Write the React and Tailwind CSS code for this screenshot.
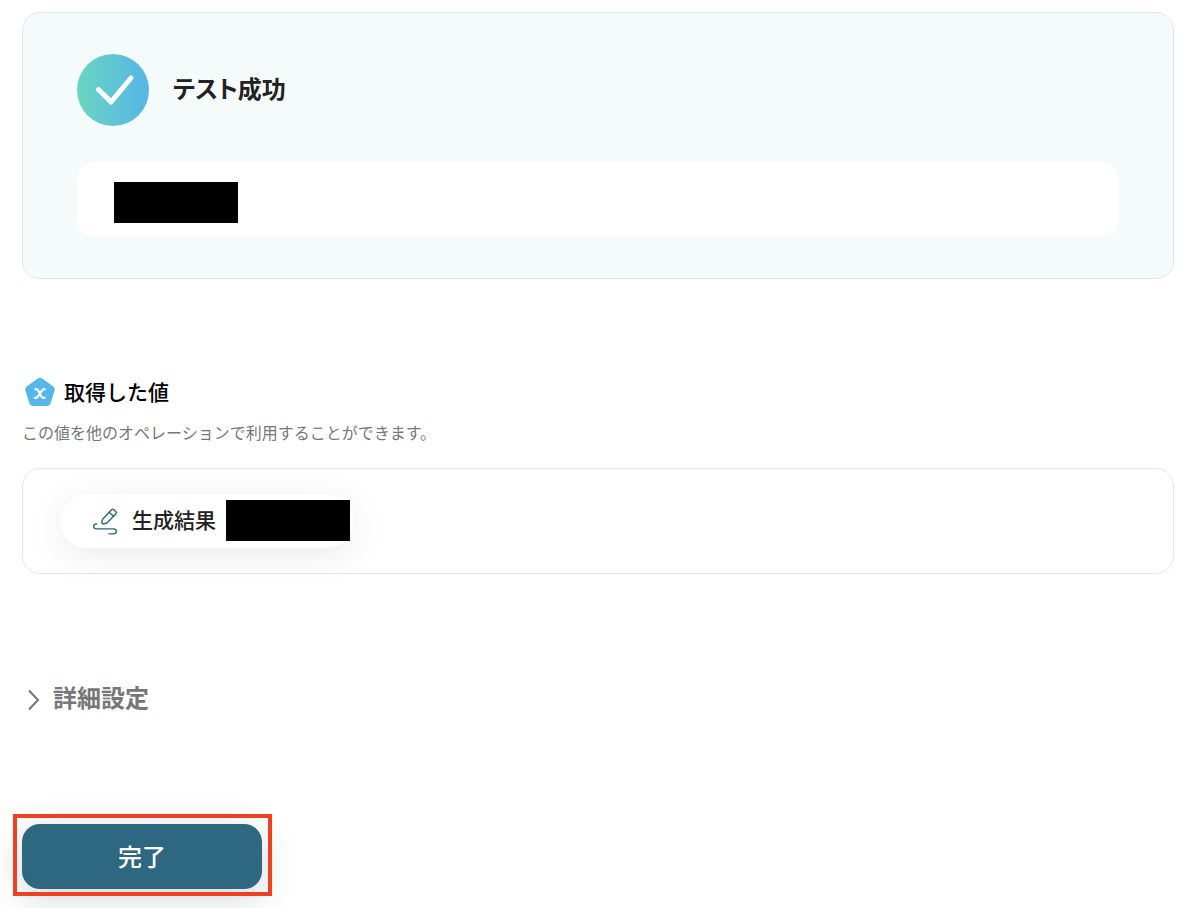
import React, { useState } from 'react';

const CheckBadge = () => (
  <svg className="size-18 shrink-0" viewBox="0 0 72 72" fill="none" aria-hidden="true">
    <defs>
      <linearGradient id="badge" x1="0" y1="0" x2="1" y2="0">
        <stop offset="0" stopColor="#6bd5c1" />
        <stop offset="1" stopColor="#55b6e7" />
      </linearGradient>
    </defs>
    <circle cx="36" cy="36" r="36" fill="url(#badge)" />
    <path
      d="M21.5 35.5L34 48L54 24"
      stroke="#fff"
      strokeWidth="5"
      strokeLinecap="round"
      strokeLinejoin="round"
    />
  </svg>
);

const ValueIcon = () => (
  <svg className="size-9 shrink-0" viewBox="0 0 36 36" fill="none" aria-hidden="true">
    <path
      d="M16.6 5.8Q18 4.9 19.4 5.8L30.4 13.6Q31.6 14.6 31.2 15.8L27.2 28.8Q26.6 30.4 25.2 30.4H10.8Q9.4 30.4 8.8 28.8L4.8 15.8Q4.4 14.6 5.6 13.6Z"
      fill="#55b6e7"
      stroke="#55b6e7"
      strokeWidth="3"
      strokeLinejoin="round"
    />
    <path
      d="M13.4 15.2C15.2 14.8 15.9 15.6 16.5 17L19.2 22.4C19.8 23.6 20.8 24.2 22.6 23.8M22.8 15.2C21 14.9 20.2 15.9 19.2 17.6L16.4 21.8C15.3 23.4 14.4 24.2 12.8 23.8"
      stroke="#fff"
      strokeWidth="2.1"
      strokeLinecap="round"
    />
  </svg>
);

const PencilIcon = () => (
  <svg
    className="size-8 shrink-0"
    viewBox="0 0 32 32"
    fill="none"
    stroke="#2d6780"
    strokeWidth="1.4"
    strokeLinecap="round"
    strokeLinejoin="round"
    aria-hidden="true"
  >
    <path d="M12.6 14.2L21.3 4.9Q22.7 3.6 24.1 4.9L25.6 6.3Q26.9 7.7 25.7 9.1L17 18L14 18.7Q11.7 19.1 11.9 16.8Z" />
    <path d="M19.2 7.2L23.4 11.2" />
    <path d="M6.8 18.9H6.2Q3.6 19.1 3.6 21.5Q3.8 23.9 6.4 23.9H23.6Q26.4 24.1 26.4 26.5Q26.2 28.9 23.6 28.9H18.8" />
  </svg>
);

const ChevronIcon = ({ open }) => (
  <svg
    className={open ? 'size-7 rotate-90' : 'size-7'}
    viewBox="0 0 28 28"
    fill="none"
    stroke="#777"
    strokeWidth="2"
    aria-hidden="true"
  >
    <path d="M4 7.5L13 17L4 26.5" />
  </svg>
);

const Redacted = () => <span className="block h-[41px] w-[124px] bg-black"></span>;

const App = () => {
  const [open, setOpen] = useState(false);

  return (
    <main className="bg-white pt-3 pr-5 pb-5 pl-[22px] font-['Noto_Sans_CJK_JP',sans-serif] text-[#222]">
      <section className="rounded-[18px] border border-[#e2e6e6] bg-[#f5fbfb] px-[54px] py-[41px]">
        <div className="flex items-center gap-6">
          <CheckBadge />
          <h2 className="pb-1 text-2xl font-bold [font-feature-settings:'palt']">テスト成功</h2>
        </div>
        <div className="mt-9 rounded-[18px] bg-white px-[37px] pt-5 pb-[14px]">
          <Redacted />
        </div>
      </section>

      <section className="mt-[95px]">
        <div className="flex items-center gap-[6px]">
          <ValueIcon />
          <h2 className="text-[21px] font-medium text-black">取得した値</h2>
        </div>
        <p className="mt-[10px] text-base text-[#777]">
          この値を他のオペレーションで利用することができます。
        </p>
        <div className="mt-6 flex rounded-[18px] border border-[#e6e6e6] px-[37px] py-[25px]">
          <div className="flex items-center rounded-full bg-white pt-[6px] pr-1 pb-[7px] pl-[30px] shadow-[0_8px_36px_rgba(0,0,0,0.08)]">
            <PencilIcon />
            <span className="mr-[10px] ml-[10px] pb-[2px] text-[21px] font-medium">生成結果</span>
            <Redacted />
          </div>
        </div>
      </section>

      <button
        type="button"
        aria-expanded={open}
        onClick={() => setOpen(!open)}
        className="mt-[107px] flex cursor-pointer items-center pl-[3px] text-2xl font-bold text-[#777]"
      >
        <ChevronIcon open={open} />
        詳細設定
      </button>

      <div className="relative mt-[111px] w-60">
        <button
          type="button"
          className="h-[65px] w-full cursor-pointer rounded-[18px] bg-[#2d6780] pb-[2px] text-2xl font-medium text-white shadow-[0_8px_36px_rgba(20,50,60,0.2)]"
        >
          完了
        </button>
        <span className="pointer-events-none absolute -top-[10px] -right-[10px] -bottom-[7px] -left-[9px] border-4 border-[#ee4023]"></span>
      </div>
    </main>
  );
};

export default App;
